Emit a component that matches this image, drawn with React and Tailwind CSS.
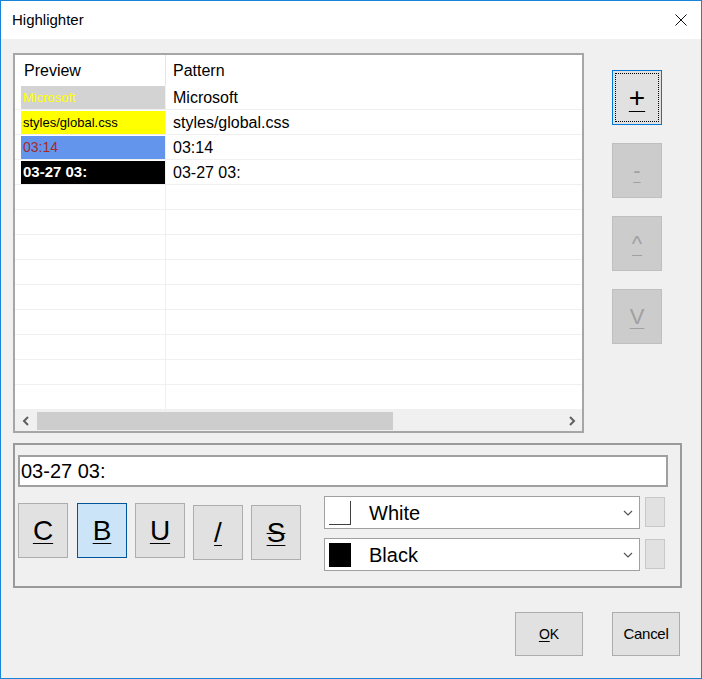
import React from 'react';

// Rows shown in the preview list.
const rules = [
  { pattern: 'Microsoft', cell: 'bg-[#d3d3d3] text-[#ffff00] text-[13px]' },
  { pattern: 'styles/global.css', cell: 'bg-[#ffff00] text-black text-[13px]' },
  { pattern: '03:14', cell: 'bg-[#6495ed] text-[#a52a2a] text-[14px]' },
  { pattern: '03-27 03:', cell: 'bg-black text-white text-[15px] font-bold' },
];

const Chevron = ({ dir }) => (
  <svg width="8" height="10" viewBox="0 0 8 10">
    <path
      d={dir === 'left' ? 'M6 1 L2 5 L6 9' : 'M2 1 L6 5 L2 9'}
      fill="none"
      stroke="#606060"
      strokeWidth="2"
    />
  </svg>
);

const DropArrow = () => (
  <svg width="10" height="6" viewBox="0 0 10 6">
    <path d="M1 1 L5 5 L9 1" fill="none" stroke="#555" strokeWidth="1.2" />
  </svg>
);

const SideButton = ({ label, disabled, focused }) => (
  <button
    className={`relative w-[50px] h-[55px] flex items-center justify-center border ${
      focused
        ? 'bg-[#e1e1e1] border-[#0078d7] text-black'
        : 'bg-[#cccccc] border-[#bfbfbf] text-[#a0a0a0]'
    }`}
    disabled={disabled}
  >
    {focused && <span className="absolute inset-[2px] border border-dotted border-black" />}
    <span
      className={`leading-none underline decoration-1 underline-offset-[4px] ${
        focused ? 'text-[28px]' : 'text-[22px]'
      }`}
    >
      {label}
    </span>
  </button>
);

const StyleButton = ({ label, active, strike, className = '' }) => (
  <button
    className={`w-[50px] h-[55px] flex items-center justify-center border ${
      active ? 'bg-[#cce4f7] border-[#005499]' : 'bg-[#e1e1e1] border-[#adadad]'
    } ${className}`}
  >
    <span className="text-[28px] leading-none text-black underline decoration-1 underline-offset-[3px]">
      {strike ? <span className="line-through decoration-1">{label}</span> : label}
    </span>
  </button>
);

const ColorCombo = ({ name, swatch }) => (
  <div className="flex items-start">
    <div className="w-[316px] h-[33px] bg-white border border-[#a0a0a0] flex items-center pl-[4px] pr-[6px]">
      {swatch === 'white' ? (
        <div className="w-[22px] h-[24px] bg-white border-r border-b border-[#404040]" />
      ) : (
        <div className="w-[22px] h-[24px] bg-black" />
      )}
      <span className="ml-[18px] text-[20px] text-black flex-1">{name}</span>
      <DropArrow />
    </div>
    <div className="ml-[5px] mt-px w-[20px] h-[30px] bg-[#e1e1e1] border border-[#c8c8c8]" />
  </div>
);

const App = () => {
  const emptyRows = Array.from({ length: 9 });

  return (
    <div className="w-[702px] h-[679px] border border-[#1883d7] bg-[#f0f0f0] flex flex-col font-['Liberation_Sans',Arial,sans-serif] text-black overflow-hidden">
      {/* Title bar */}
      <div className="h-[38px] bg-white flex items-center justify-between pl-[11px] pr-[14px] shrink-0">
        <span className="text-[15px]">Highlighter</span>
        <svg width="12" height="12" viewBox="0 0 12 12">
          <path d="M0.5 0.5 L11.5 11.5 M11.5 0.5 L0.5 11.5" stroke="#111" strokeWidth="1" />
        </svg>
      </div>

      {/* Body */}
      <div className="flex-1 pl-[12px] pt-[14px]">
        <div className="flex items-start">
          {/* List view */}
          <div className="w-[571px] h-[380px] border-2 border-[#a6a6a6] bg-white flex flex-col">
            <div className="h-[30px] flex shrink-0 text-[16px]">
              <div className="w-[151px] pl-[9px] pt-[2px] flex items-center border-r border-[#e5e5e5]">Preview</div>
              <div className="flex-1 pl-[7px] pt-[2px] flex items-center">Pattern</div>
            </div>
            {rules.map((rule) => (
              <div key={rule.pattern} className="h-[25px] flex border-b border-[#f0f0f0] shrink-0">
                <div className="w-[151px] pl-[6px] pt-[1px] border-r border-[#f0f0f0]">
                  <div className={`h-full flex items-center pl-[2px] whitespace-nowrap ${rule.cell}`}>
                    {rule.pattern}
                  </div>
                </div>
                <div className="flex-1 pl-[7px] pt-[1px] flex items-center text-[16px] whitespace-nowrap">
                  {rule.pattern}
                </div>
              </div>
            ))}
            {emptyRows.map((_, i) => (
              <div key={i} className="h-[25px] flex border-b border-[#f0f0f0] shrink-0">
                <div className="w-[151px] border-r border-[#f0f0f0]" />
                <div className="flex-1" />
              </div>
            ))}
            {/* Horizontal scrollbar */}
            <div className="flex-1 bg-[#f0f0f0] flex items-center">
              <div className="w-[22px] flex justify-center">
                <Chevron dir="left" />
              </div>
              <div className="flex-1 h-full flex items-center">
                <div className="w-[356px] h-[18px] bg-[#cdcdcd]" />
              </div>
              <div className="w-[20px] flex justify-center">
                <Chevron dir="right" />
              </div>
            </div>
          </div>

          {/* Side buttons */}
          <div className="ml-[28px] mt-[17px] flex flex-col gap-[18px]">
            <SideButton label="+" focused />
            <SideButton label="-" disabled />
            <SideButton label="^" disabled />
            <SideButton label="V" disabled />
          </div>
        </div>

        {/* Editor group */}
        <div className="mt-[10px] w-[669px] h-[145px] border-2 border-[#9a9a9a] pl-[3px] pt-[10px]">
          <div className="w-[650px] h-[32px] bg-white border-2 border-[#a0a0a0] flex items-center pl-[1px] text-[20px]">
            03-27 03:
          </div>
          <div className="flex items-start mt-[9px]">
            <div className="flex items-start mt-[7px]">
              <StyleButton label="C" />
              <StyleButton label="B" active className="ml-[9px]" />
              <StyleButton label="U" className="ml-[8px]" />
              <StyleButton label="/" className="ml-[8px] mt-[2px]" />
              <StyleButton label="S" strike className="ml-[8px] mt-[2px]" />
            </div>
            <div className="ml-[23px] flex flex-col gap-[9px]">
              <ColorCombo name="White" swatch="white" />
              <ColorCombo name="Black" swatch="black" />
            </div>
          </div>
        </div>

        {/* Dialog buttons */}
        <div className="mt-[24px] flex justify-end gap-[29px] pr-[21px]">
          <button className="w-[68px] h-[44px] bg-[#e1e1e1] border border-[#adadad] text-[14px]">
            <span className="underline decoration-1 underline-offset-[2px]">O</span>K
          </button>
          <button className="w-[68px] h-[44px] bg-[#e1e1e1] border border-[#adadad] text-[15px] tracking-[-0.3px]">
            Cancel
          </button>
        </div>
      </div>
    </div>
  );
};

export default App;
